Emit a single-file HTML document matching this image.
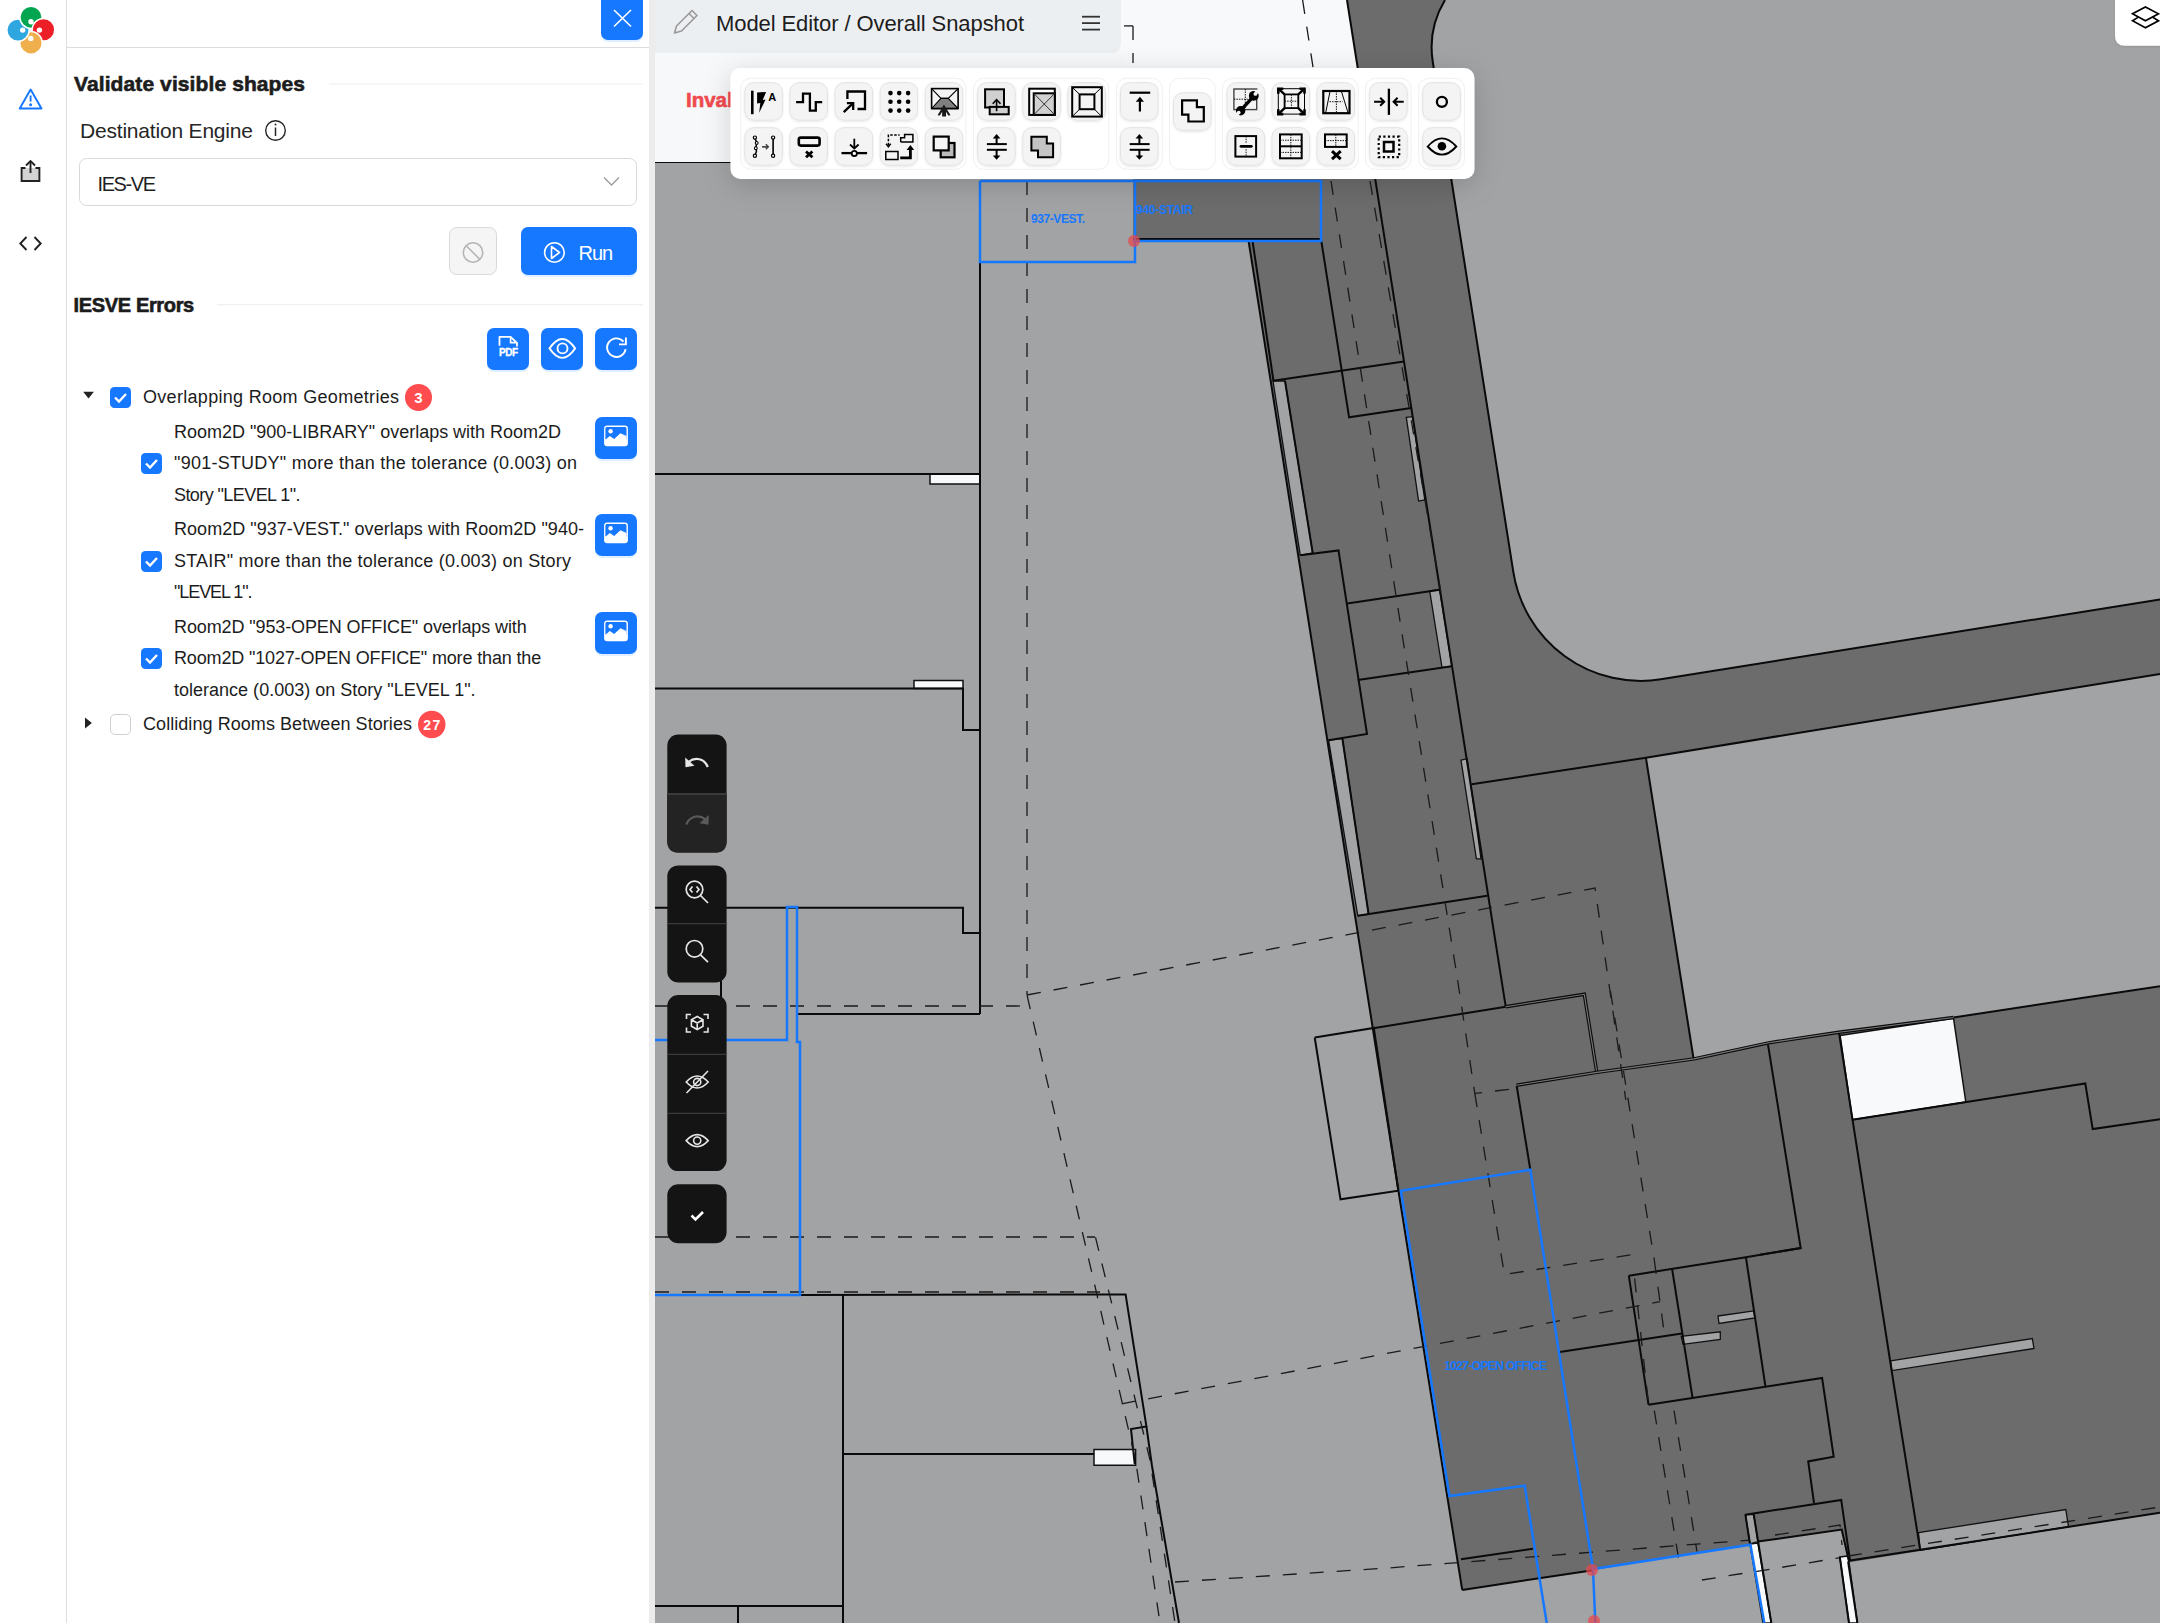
<!DOCTYPE html><html><head><meta charset="utf-8"><style>html,body{margin:0;padding:0;width:2160px;height:1623px;overflow:hidden;background:#fff;}body{position:relative;font-family:"Liberation Sans", sans-serif;}</style></head><body><svg width="2160" height="1623" style="position:absolute;left:0;top:0" font-family='"Liberation Sans", sans-serif'>
<defs><filter id="sh" x="-15%" y="-60%" width="130%" height="220%"><feDropShadow dx="0" dy="6" stdDeviation="14" flood-color="#000" flood-opacity="0.16"/></filter><filter id="sh2" x="-20%" y="-20%" width="140%" height="160%"><feDropShadow dx="0" dy="1" stdDeviation="1" flood-color="#000" flood-opacity="0.10"/></filter><filter id="bsh" x="-20%" y="-20%" width="140%" height="160%"><feDropShadow dx="0" dy="2" stdDeviation="0.6" flood-color="#1677ff" flood-opacity="0.12"/></filter><clipPath id="cv"><rect x="655" y="0" width="1505" height="1623"/></clipPath></defs>
<g clip-path="url(#cv)"><rect x="655" y="0" width="1505" height="1623" fill="#f8f9fa"/><polygon fill="#a2a3a5" points="655.0,162.0 1373.0,162.0 1347.0,0.0 2160.0,0.0 2160.0,1623.0 655.0,1623.0"/><path fill="#6c6c6c" d="M1347,0 L1445,0 A92,92 0 0,0 1432.8,62 L1513.3,571.9 A129,129 0 0,0 1660.9,679.3 L2160,599.4 L2160,674 L1645.9,757.7 L1693.6,1059 L1768.6,1042.8 L1838.9,1032.2 L1953.5,1017.5 L2160,986.2 L2160,1512.7 L1848.7,1562.4 L1841.7,1529.5 L1757.9,1541.6 L1750,1544 L1593,1570.2 L1462.2,1589.9 L1398.4,1190.7 L1248.6,241 L1133,241 L1133,162 L1373,162 Z"/><polygon fill="#a2a3a5" stroke="#111" stroke-width="1.3" points="1273.0,381.0 1285.0,381.0 1312.7,553.0 1300.3,555.3"/><polygon fill="#a2a3a5" stroke="#111" stroke-width="1.3" points="1328.6,740.2 1342.4,738.6 1368.6,914.2 1357.8,915.8"/><polygon fill="#a2a3a5" stroke="#111" stroke-width="1.3" points="1406.3,417.3 1412.5,416.6 1424.8,499.9 1418.6,501.1"/><polygon fill="#a2a3a5" stroke="#111" stroke-width="1.3" points="1429.7,591.0 1439.6,589.8 1451.8,666.2 1442.0,667.6"/><polygon fill="#a2a3a5" stroke="#111" stroke-width="1.3" points="1461.0,760.2 1467.2,758.7 1481.0,858.8 1476.4,858.8"/><polygon fill="#a2a3a5" stroke="#111" stroke-width="1.3" points="1890.6,1360.8 2032.3,1338.6 2034.0,1348.5 1891.9,1370.6"/><polygon fill="#a2a3a5" stroke="#111" stroke-width="1.3" points="1918.5,1532.7 2065.8,1509.5 2068.5,1526.6 1920.2,1550.2"/><polygon fill="#a2a3a5" stroke="#111" stroke-width="1.3" points="1681.2,1336.4 1720.3,1331.8 1720.3,1339.4 1683.0,1344.3"/><polygon fill="#a2a3a5" stroke="#111" stroke-width="1.3" points="1718.0,1316.0 1753.7,1310.9 1754.9,1317.9 1719.0,1323.5"/><polygon fill="#a2a3a5" stroke="#111" stroke-width="1.3" points="1745.4,1514.7 1753.7,1514.3 1757.9,1541.6 1750.0,1543.9"/><polygon fill="#f8f9fb" stroke="#111" stroke-width="1.5" points="1840.1,1035.5 1953.5,1018.2 1965.8,1102.0 1852.4,1119.7"/><polygon fill="#f8f9fb" stroke="#111" stroke-width="1.5" points="1750.0,1543.9 1757.9,1543.0 1771.3,1623.0 1763.0,1623.0"/><polygon fill="#f8f9fb" stroke="#111" stroke-width="1.5" points="1839.8,1556.9 1848.1,1555.9 1857.4,1623.0 1849.0,1623.0"/><polygon fill="#f8f9fb" stroke="#111" stroke-width="1.5" points="930.0,474.0 980.0,474.0 980.0,484.0 930.0,484.0"/><polygon fill="#f8f9fb" stroke="#111" stroke-width="1.5" points="914.0,680.5 963.0,680.5 963.0,688.6 914.0,688.6"/><polygon fill="#f8f9fb" stroke="#111" stroke-width="1.5" points="1094.0,1449.4 1135.6,1449.4 1135.6,1465.3 1094.0,1465.3"/><path fill="none" stroke="#0a0a0a" stroke-width="2" d="M1445,0 A92,92 0 0,0 1432.8,62 L1513.3,571.9 A129,129 0 0,0 1660.9,679.3 L2160,599.4"/><polyline fill="none" stroke="#0a0a0a" stroke-width="2" stroke-linejoin="miter" points="655.0,162.0 1133.0,162.0"/><polyline fill="none" stroke="#0a0a0a" stroke-width="2" stroke-linejoin="miter" points="980.0,181.0 980.0,1014.0"/><polyline fill="none" stroke="#0a0a0a" stroke-width="2" stroke-linejoin="miter" points="655.0,474.0 980.0,474.0"/><polyline fill="none" stroke="#0a0a0a" stroke-width="2" stroke-linejoin="miter" points="655.0,688.6 963.0,688.6 963.0,730.0 980.0,730.0"/><polyline fill="none" stroke="#0a0a0a" stroke-width="2" stroke-linejoin="miter" points="655.0,907.8 963.0,907.8 963.0,933.0 980.0,933.0"/><polyline fill="none" stroke="#0a0a0a" stroke-width="2" stroke-linejoin="miter" points="797.0,1014.0 980.0,1014.0"/><polyline fill="none" stroke="#0a0a0a" stroke-width="2" stroke-linejoin="miter" points="721.0,907.0 721.0,1000.0"/><polyline fill="none" stroke="#0a0a0a" stroke-width="2" stroke-linejoin="miter" points="800.0,1295.0 1125.6,1294.4 1146.4,1426.4 1131.0,1429.0 1134.7,1464.0"/><polyline fill="none" stroke="#0a0a0a" stroke-width="2" stroke-linejoin="miter" points="843.0,1294.0 843.0,1623.0"/><polyline fill="none" stroke="#0a0a0a" stroke-width="2" stroke-linejoin="miter" points="843.0,1454.0 1094.0,1454.0"/><polyline fill="none" stroke="#0a0a0a" stroke-width="2" stroke-linejoin="miter" points="1146.4,1426.4 1152.0,1466.0 1179.0,1623.0"/><polyline fill="none" stroke="#0a0a0a" stroke-width="2" stroke-linejoin="miter" points="655.0,1606.0 843.0,1606.0"/><polyline fill="none" stroke="#0a0a0a" stroke-width="2" stroke-linejoin="miter" points="738.0,1606.0 738.0,1623.0"/><polyline fill="none" stroke="#0a0a0a" stroke-width="2" stroke-linejoin="miter" points="1248.6,241.0 1398.4,1190.7"/><polyline fill="none" stroke="#0a0a0a" stroke-width="2" stroke-linejoin="miter" points="1133.0,239.0 1321.0,239.0"/><polyline fill="none" stroke="#0a0a0a" stroke-width="2" stroke-linejoin="miter" points="1252.5,241.0 1273.5,381.0"/><polyline fill="none" stroke="#0a0a0a" stroke-width="2" stroke-linejoin="miter" points="1321.3,241.0 1349.1,417.3 1411.2,407.9"/><polyline fill="none" stroke="#0a0a0a" stroke-width="2" stroke-linejoin="miter" points="1273.2,380.8 1403.8,361.4"/><polyline fill="none" stroke="#0a0a0a" stroke-width="2" stroke-linejoin="miter" points="1285.0,380.8 1312.7,552.9"/><polyline fill="none" stroke="#0a0a0a" stroke-width="2" stroke-linejoin="miter" points="1300.3,555.3 1338.5,550.4 1367.0,734.0 1328.6,740.2"/><polyline fill="none" stroke="#0a0a0a" stroke-width="2" stroke-linejoin="miter" points="1347.2,603.4 1439.6,589.8"/><polyline fill="none" stroke="#0a0a0a" stroke-width="2" stroke-linejoin="miter" points="1357.8,680.1 1451.8,666.2"/><polyline fill="none" stroke="#0a0a0a" stroke-width="2" stroke-linejoin="miter" points="1342.4,738.6 1368.6,914.2"/><polyline fill="none" stroke="#0a0a0a" stroke-width="2" stroke-linejoin="miter" points="1357.8,915.8 1487.2,895.7"/><polyline fill="none" stroke="#0a0a0a" stroke-width="2" stroke-linejoin="miter" points="1373.2,1028.2 1505.7,1006.7"/><polyline fill="none" stroke="#0a0a0a" stroke-width="2" stroke-linejoin="miter" points="1347.0,0.0 1505.7,1006.7"/><polyline fill="none" stroke="#0a0a0a" stroke-width="2" stroke-linejoin="miter" points="1471.8,784.2 1645.9,757.7 2160.0,674.0"/><polyline fill="none" stroke="#0a0a0a" stroke-width="2" stroke-linejoin="miter" points="1645.9,757.7 1693.6,1059.0"/><polyline fill="none" stroke="#0a0a0a" stroke-width="2" stroke-linejoin="miter" points="1953.5,1017.5 2160.0,986.2"/><polyline fill="none" stroke="#0a0a0a" stroke-width="2" stroke-linejoin="miter" points="1314.7,1037.5 1373.8,1028.0 1398.4,1190.7 1340.5,1199.3 1314.7,1037.5"/><polyline fill="none" stroke="#0a0a0a" stroke-width="2" stroke-linejoin="miter" points="1516.7,1086.0 1530.3,1169.7"/><polyline fill="none" stroke="#0a0a0a" stroke-width="2" stroke-linejoin="miter" points="1768.0,1044.6 1800.7,1248.1 1760.0,1254.8"/><polyline fill="none" stroke="#0a0a0a" stroke-width="2" stroke-linejoin="miter" points="1559.8,1352.1 1681.8,1333.6"/><polyline fill="none" stroke="#0a0a0a" stroke-width="2" stroke-linejoin="miter" points="1628.8,1275.7 1745.9,1257.2 1800.7,1248.1"/><polyline fill="none" stroke="#0a0a0a" stroke-width="2" stroke-linejoin="miter" points="1628.8,1275.7 1648.5,1404.7"/><polyline fill="none" stroke="#0a0a0a" stroke-width="2" stroke-linejoin="miter" points="1672.0,1268.3 1692.5,1397.7"/><polyline fill="none" stroke="#0a0a0a" stroke-width="2" stroke-linejoin="miter" points="1745.9,1257.2 1765.4,1386.2"/><polyline fill="none" stroke="#0a0a0a" stroke-width="2" stroke-linejoin="miter" points="1648.5,1404.7 1822.1,1378.0 1833.7,1456.8 1808.2,1461.4 1814.0,1503.0"/><polyline fill="none" stroke="#0a0a0a" stroke-width="2" stroke-linejoin="miter" points="1745.4,1514.7 1841.2,1499.9 1850.0,1560.6 2160.0,1512.7"/><polyline fill="none" stroke="#0a0a0a" stroke-width="2" stroke-linejoin="miter" points="1757.9,1541.6 1841.7,1529.5 1849.0,1561.5"/><polyline fill="none" stroke="#0a0a0a" stroke-width="2" stroke-linejoin="miter" points="1745.4,1514.7 1750.0,1544.0"/><polyline fill="none" stroke="#0a0a0a" stroke-width="2" stroke-linejoin="miter" points="1753.7,1514.3 1771.3,1623.0"/><polyline fill="none" stroke="#0a0a0a" stroke-width="2" stroke-linejoin="miter" points="1839.8,1556.9 1849.0,1623.0"/><polyline fill="none" stroke="#0a0a0a" stroke-width="2" stroke-linejoin="miter" points="1848.1,1561.5 1857.4,1623.0"/><polyline fill="none" stroke="#0a0a0a" stroke-width="2" stroke-linejoin="miter" points="1838.9,1032.2 1893.1,1380.0 1920.2,1550.2"/><polyline fill="none" stroke="#0a0a0a" stroke-width="2" stroke-linejoin="miter" points="1852.4,1119.7 2085.3,1083.5 2092.7,1129.1 2160.0,1119.2"/><polyline fill="none" stroke="#0a0a0a" stroke-width="2" stroke-linejoin="miter" points="1462.2,1589.9 1593.0,1570.2"/><polyline fill="none" stroke="#0a0a0a" stroke-width="2" stroke-linejoin="miter" points="1461.0,1559.3 1533.0,1548.8"/><polyline fill="none" stroke="#0a0a0a" stroke-width="2" stroke-linejoin="miter" points="1398.4,1190.7 1462.2,1589.9"/><polyline fill="none" stroke="#0a0a0a" stroke-width="3.4" points="1505.7,1006.7 1584.3,994.3 1596.6,1071.3"/><polyline fill="none" stroke="#7a7a7a" stroke-width="1.1" points="1505.7,1006.7 1584.3,994.3 1596.6,1071.3"/><polyline fill="none" stroke="#0a0a0a" stroke-width="3.4" points="1516.5,1085.2 1596.8,1072.4 1694.1,1058.9 1768.6,1042.8 1838.9,1032.2 1953.5,1017.5"/><polyline fill="none" stroke="#7a7a7a" stroke-width="1.1" points="1516.5,1085.2 1596.8,1072.4 1694.1,1058.9 1768.6,1042.8 1838.9,1032.2 1953.5,1017.5"/><polyline fill="none" stroke="#1a1a1a" stroke-width="1.3" stroke-dasharray="14,13" points="1027.0,181.0 1027.0,995.0"/><polyline fill="none" stroke="#1a1a1a" stroke-width="1.3" stroke-dasharray="14,13" points="655.0,1006.0 1027.0,1006.0"/><polyline fill="none" stroke="#1a1a1a" stroke-width="1.3" stroke-dasharray="14,13" points="1027.0,995.0 1595.0,888.0 1625.8,1100.0"/><polyline fill="none" stroke="#1a1a1a" stroke-width="1.3" stroke-dasharray="14,13" points="1457.6,980.0 1474.8,1093.4 1516.7,1088.4"/><polyline fill="none" stroke="#1a1a1a" stroke-width="1.3" stroke-dasharray="14,13" points="1474.8,1093.4 1504.4,1274.5 1631.3,1254.8"/><polyline fill="none" stroke="#1a1a1a" stroke-width="1.3" stroke-dasharray="14,13" points="1610.4,991.0 1654.3,1260.0"/><polyline fill="none" stroke="#1a1a1a" stroke-width="1.3" stroke-dasharray="14,13" points="1370.0,181.0 1440.8,592.0"/><polyline fill="none" stroke="#1a1a1a" stroke-width="1.3" stroke-dasharray="14,13" points="1331.0,181.0 1401.4,630.0 1457.6,980.0"/><polyline fill="none" stroke="#1a1a1a" stroke-width="1.3" stroke-dasharray="14,13" points="1302.6,0.0 1315.0,80.0"/><polyline fill="none" stroke="#1a1a1a" stroke-width="1.3" stroke-dasharray="14,13" points="1027.1,995.4 1135.6,1460.2 1160.0,1623.0"/><polyline fill="none" stroke="#1a1a1a" stroke-width="1.3" stroke-dasharray="14,13" points="1095.5,1237.3 1150.0,1460.0 1175.0,1623.0"/><polyline fill="none" stroke="#1a1a1a" stroke-width="1.3" stroke-dasharray="14,13" points="655.0,1237.0 1095.0,1237.0"/><polyline fill="none" stroke="#1a1a1a" stroke-width="1.3" stroke-dasharray="14,13" points="655.0,1292.0 1100.0,1292.0"/><polyline fill="none" stroke="#1a1a1a" stroke-width="1.3" stroke-dasharray="14,13" points="1121.7,1403.8 1660.0,1301.7"/><polyline fill="none" stroke="#1a1a1a" stroke-width="1.3" stroke-dasharray="14,13" points="1175.0,1582.0 1389.3,1567.9 1700.0,1543.9 1750.0,1540.2"/><polyline fill="none" stroke="#1a1a1a" stroke-width="1.3" stroke-dasharray="14,13" points="1755.6,1571.7 1838.9,1557.8"/><polyline fill="none" stroke="#1a1a1a" stroke-width="1.3" stroke-dasharray="14,13" points="1848.0,1556.0 2160.0,1507.0"/><polyline fill="none" stroke="#1a1a1a" stroke-width="1.3" stroke-dasharray="14,13" points="1701.9,1580.0 1748.0,1572.6"/><polyline fill="none" stroke="#1a1a1a" stroke-width="1.3" stroke-dasharray="14,13" points="1775.0,1535.0 1840.0,1525.0 1842.0,1545.0"/><polyline fill="none" stroke="#1a1a1a" stroke-width="1.3" stroke-dasharray="14,13" points="1634.6,1278.5 1648.5,1403.5"/><polyline fill="none" stroke="#1a1a1a" stroke-width="1.3" stroke-dasharray="14,13" points="1654.3,1260.0 1664.7,1336.4"/><polyline fill="none" stroke="#1a1a1a" stroke-width="1.3" stroke-dasharray="14,13" points="1654.3,1410.5 1678.6,1558.6"/><polyline fill="none" stroke="#1a1a1a" stroke-width="1.3" stroke-dasharray="14,13" points="1674.0,1410.5 1697.0,1551.7"/><polyline fill="none" stroke="#1a1a1a" stroke-width="1.3" stroke-dasharray="14,13" points="1133.0,25.9 1133.0,63.0"/><polyline fill="none" stroke="#1a1a1a" stroke-width="1.3" stroke-dasharray="14,13" points="1124.0,25.9 1133.0,25.9"/><polyline fill="none" stroke="#1677ff" stroke-width="2.5" points="980.0,181.0 1135.0,181.0 1135.0,262.0 980.0,262.0 980.0,181.0"/><polyline fill="none" stroke="#1677ff" stroke-width="2.5" points="1133.0,181.0 1321.0,181.0 1321.0,241.0 1133.0,241.0"/><polyline fill="none" stroke="#1677ff" stroke-width="2.5" points="655.0,1040.0 787.0,1040.0 787.0,907.0 797.0,907.0 797.0,1042.0 800.0,1042.0 800.0,1295.0 655.0,1295.0"/><polyline fill="none" stroke="#1677ff" stroke-width="2.5" points="1546.7,1623.0 1524.7,1485.7 1449.4,1496.1 1400.9,1190.7 1530.3,1169.7 1593.0,1569.0 1750.4,1544.7 1764.3,1623.0"/><polyline fill="none" stroke="#1677ff" stroke-width="2.5" points="1593.0,1569.0 1595.3,1623.0"/><circle cx="1134" cy="241" r="6" fill="#e5484d" fill-opacity="0.75"/><circle cx="1592" cy="1570" r="6" fill="#e5484d" fill-opacity="0.75"/><circle cx="1594" cy="1621" r="6" fill="#e5484d" fill-opacity="0.75"/><text x="1031" y="223" font-size="12" font-weight="bold" fill="#1677ff" text-anchor="start" textLength="54" lengthAdjust="spacing" >937-VEST.</text><text x="1136" y="214" font-size="12" font-weight="bold" fill="#1677ff" text-anchor="start" textLength="57" lengthAdjust="spacing" >940-STAIR</text><text x="1444" y="1369.5" font-size="12.5" font-weight="bold" fill="#1677ff" text-anchor="start" textLength="103" lengthAdjust="spacing" >1027-OPEN OFFICE</text></g>
<rect x="655" y="53" width="470" height="109" fill="#f7f8fa"/>
<text x="686" y="107" font-size="20.5" font-weight="bold" fill="#f04a4f" text-anchor="start" stroke="#f04a4f" stroke-width="0.6">Invalid</text>
<path d="M655,0 H1121 V43 Q1121,53 1111,53 H655 Z" fill="#eceff2"/>
<g fill="none" stroke="#9a9a9a" stroke-width="1.6" stroke-linejoin="round"><path d="M674.5,33 L676.5,26 L692,10.5 L697,15.5 L681.5,31 Z"/><path d="M689,13.5 L694,18.5"/></g>
<text x="716" y="31.2" font-size="22" font-weight="normal" fill="#1d1d1d" text-anchor="start" textLength="308" lengthAdjust="spacing" >Model Editor / Overall Snapshot</text>
<g stroke="#333" stroke-width="1.8"><line x1="1082" y1="16.7" x2="1100" y2="16.7"/><line x1="1082" y1="23.1" x2="1100" y2="23.1"/><line x1="1082" y1="29.6" x2="1100" y2="29.6"/></g>
<rect x="730.5" y="68" width="744" height="111" rx="10" fill="#fff" filter="url(#sh)"/>
<rect x="740.7" y="78.3" width="225.3" height="91" rx="10" fill="#fff" stroke="#f0f0f0" stroke-width="1"/>
<rect x="973.6" y="78.3" width="135.2" height="91" rx="10" fill="#fff" stroke="#f0f0f0" stroke-width="1"/>
<rect x="1116.6" y="78.3" width="45.7" height="91" rx="10" fill="#fff" stroke="#f0f0f0" stroke-width="1"/>
<rect x="1169.5" y="78.3" width="45.7" height="91" rx="10" fill="#fff" stroke="#f0f0f0" stroke-width="1"/>
<rect x="1222.4" y="78.3" width="135.8" height="91" rx="10" fill="#fff" stroke="#f0f0f0" stroke-width="1"/>
<rect x="1365.4" y="78.3" width="45.6" height="91" rx="10" fill="#fff" stroke="#f0f0f0" stroke-width="1"/>
<rect x="1418.7" y="78.3" width="45.7" height="91" rx="10" fill="#fff" stroke="#f0f0f0" stroke-width="1"/>
<g transform="translate(744.3,82.2)"><rect x="0.5" y="0.5" width="37.5" height="37.5" rx="9" fill="#f4f4f4" stroke="#e3e3e3" stroke-width="1" filter="url(#sh2)"/><line x1="8" y1="8.5" x2="8" y2="32" stroke="#000" stroke-width="2.6"/><polygon points="12.8,10.3 21.8,9.8 18.4,17.8 21.3,17.3 14.9,30.6 16,20.8 12.8,21.2" fill="#000"/><text x="24" y="18.8" font-size="11" font-weight="bold">A</text></g>
<g transform="translate(744.3,127.2)"><rect x="0.5" y="0.5" width="37.5" height="37.5" rx="9" fill="#f4f4f4" stroke="#e3e3e3" stroke-width="1" filter="url(#sh2)"/><polyline fill="none" stroke="#000" stroke-width="1.5" points="10.6,10.4 12.4,15.7 11.5,21 12.2,24 10.6,28.5"/><circle cx="10.6" cy="10.4" r="1.6" fill="#fff" stroke="#000" stroke-width="1.2"/><circle cx="12.4" cy="15.7" r="1.4" fill="#fff" stroke="#000" stroke-width="1.1"/><circle cx="11.5" cy="21" r="1.4" fill="#fff" stroke="#000" stroke-width="1.1"/><circle cx="10.6" cy="28.5" r="1.6" fill="#fff" stroke="#000" stroke-width="1.2"/><line x1="28.8" y1="10.4" x2="28.8" y2="28.5" stroke="#000" stroke-width="1.6"/><circle cx="28.8" cy="10.4" r="1.6" fill="#fff" stroke="#000" stroke-width="1.2"/><circle cx="28.8" cy="28.5" r="1.6" fill="#fff" stroke="#000" stroke-width="1.2"/><polyline fill="none" stroke="#444" stroke-width="1.4" points="18,19.5 24,19.5 M21.5,17 24,19.5 21.5,22"/><path d="M18,19.5 H24 M21.5,17 L24,19.5 L21.5,22" fill="none" stroke="#444" stroke-width="1.4"/></g>
<g transform="translate(789.4,82.2)"><rect x="0.5" y="0.5" width="37.5" height="37.5" rx="9" fill="#f4f4f4" stroke="#e3e3e3" stroke-width="1" filter="url(#sh2)"/><polyline fill="none" stroke="#000" stroke-width="2.3" points="6.7,19.9 13.6,19.9 13.6,11.4 20.5,11.4 20.5,28.4 26.4,28.4 26.4,19.9 32.8,19.9"/></g>
<g transform="translate(789.4,127.2)"><rect x="0.5" y="0.5" width="37.5" height="37.5" rx="9" fill="#f4f4f4" stroke="#e3e3e3" stroke-width="1" filter="url(#sh2)"/><rect x="9.4" y="10.4" width="20.8" height="8" rx="2" fill="none" stroke="#000" stroke-width="2.6"/><path d="M16.6,24.3 L23,30.1 M23,24.3 L16.6,30.1" stroke="#000" stroke-width="2.8"/></g>
<g transform="translate(834.5,82.2)"><rect x="0.5" y="0.5" width="37.5" height="37.5" rx="9" fill="#f4f4f4" stroke="#e3e3e3" stroke-width="1" filter="url(#sh2)"/><polyline fill="none" stroke="#000" stroke-width="2.3" points="12.9,16.7 12.9,9.3 30.5,9.3 30.5,26.8 23,26.8"/><line fill="none" stroke="#000" stroke-width="2.3" x1="9.2" y1="30" x2="18.7" y2="21"/><polyline fill="none" stroke="#000" stroke-width="2.3" points="12.4,21 18.7,21 18.7,27.9"/></g>
<g transform="translate(834.5,127.2)"><rect x="0.5" y="0.5" width="37.5" height="37.5" rx="9" fill="#f4f4f4" stroke="#e3e3e3" stroke-width="1" filter="url(#sh2)"/><line x1="19.8" y1="11.5" x2="19.8" y2="21" stroke="#000" stroke-width="1.8"/><polyline fill="none" stroke="#000" stroke-width="1.8" points="15.5,17.3 19.8,21.3 24.1,17.3"/><line x1="7" y1="25.9" x2="32.6" y2="25.9" stroke="#000" stroke-width="2.3"/><circle cx="19.8" cy="26.2" r="2.6" fill="#fff" stroke="#000" stroke-width="1.8"/></g>
<g transform="translate(879.6,82.2)"><rect x="0.5" y="0.5" width="37.5" height="37.5" rx="9" fill="#f4f4f4" stroke="#e3e3e3" stroke-width="1" filter="url(#sh2)"/><circle cx="10.9" cy="10.9" r="2.3" fill="#000"/><circle cx="10.9" cy="19.6" r="2.3" fill="#000"/><circle cx="10.9" cy="28.4" r="2.3" fill="#000"/><circle cx="19.6" cy="10.9" r="2.3" fill="#000"/><circle cx="19.6" cy="19.6" r="2.3" fill="#000"/><circle cx="19.6" cy="28.4" r="2.3" fill="#000"/><circle cx="28.5" cy="10.9" r="2.3" fill="#000"/><circle cx="28.5" cy="19.6" r="2.3" fill="#000"/><circle cx="28.5" cy="28.4" r="2.3" fill="#000"/></g>
<g transform="translate(879.6,127.2)"><rect x="0.5" y="0.5" width="37.5" height="37.5" rx="9" fill="#f4f4f4" stroke="#e3e3e3" stroke-width="1" filter="url(#sh2)"/><polyline fill="none" stroke="#000" stroke-width="1.5" stroke-dasharray="2.5,1.5" points="8.8,18 8.8,7.8 20,7.8"/><polyline fill="none" stroke="#000" stroke-width="1.5" points="6.5,16.5 8.8,19.5 11.1,16.5"/><polyline fill="none" stroke="#000" stroke-width="1.5" points="21.1,14.7 21.1,10.5 25,10.5 25,7.2 33.3,7.2 33.3,14.7 21.1,14.7"/><rect x="6.2" y="24.3" width="12.2" height="8" fill="none" stroke="#000" stroke-width="1.5"/><polyline fill="none" stroke="#000" stroke-width="2.8" points="20.6,30.7 30.8,30.7 30.8,21.5"/><polygon points="30.8,17.8 27,22.8 34.6,22.8" fill="#000"/></g>
<g transform="translate(924.7,82.2)"><rect x="0.5" y="0.5" width="37.5" height="37.5" rx="9" fill="#f4f4f4" stroke="#e3e3e3" stroke-width="1" filter="url(#sh2)"/><rect x="6.9" y="6.4" width="26.5" height="19.9" fill="#f4f4f4" stroke="#000" stroke-width="1.6"/><polygon points="16.3,16.2 23.5,16.2 33.4,26.3 6.9,26.3" fill="#808080"/><polyline points="6.9,6.4 16.3,16.2 23.5,16.2 33.4,6.4" fill="none" stroke="#000" stroke-width="1.1"/><polyline points="6.9,26.3 16.3,16.2 23.5,16.2 33.4,26.3" fill="none" stroke="#000" stroke-width="1.1"/><line x1="6.9" y1="26.3" x2="33.4" y2="26.3" stroke="#000" stroke-width="1.6"/><polygon points="19.2,22.3 25.9,33 23.6,33.4 21.3,29.6 21.3,34.3 17.4,34.3 17.4,29.6 15.2,33.4 12.9,33" fill="#1a1a1a"/></g>
<g transform="translate(924.7,127.2)"><rect x="0.5" y="0.5" width="37.5" height="37.5" rx="9" fill="#f4f4f4" stroke="#e3e3e3" stroke-width="1" filter="url(#sh2)"/><rect x="16" y="15.8" width="13.8" height="14.3" fill="#bbb" stroke="#000" stroke-width="2.2"/><rect x="9" y="9.4" width="15" height="13.8" fill="#f4f4f4" stroke="#000" stroke-width="2.2"/></g>
<g transform="translate(977.2,82.2)"><rect x="0.5" y="0.5" width="37.5" height="37.5" rx="9" fill="#f4f4f4" stroke="#e3e3e3" stroke-width="1" filter="url(#sh2)"/><rect x="7.9" y="7.1" width="18.9" height="18.2" fill="#d0d0d0" stroke="#000" stroke-width="2"/><rect x="12.5" y="24.7" width="19" height="7.4" fill="#d0d0d0" stroke="#000" stroke-width="2"/><line x1="19.4" y1="29" x2="19.4" y2="18" stroke="#000" stroke-width="1.6"/><polyline fill="none" stroke="#000" stroke-width="1.6" points="15.5,21.5 19.4,17.5 23.3,21.5"/></g>
<g transform="translate(1022.3,82.2)"><rect x="0.5" y="0.5" width="37.5" height="37.5" rx="9" fill="#f4f4f4" stroke="#e3e3e3" stroke-width="1" filter="url(#sh2)"/><rect x="6.9" y="6.5" width="25.6" height="26.2" fill="#fff" stroke="#000" stroke-width="2"/><rect x="11.4" y="11.1" width="21.1" height="21.6" fill="#d0d0d0" stroke="#000" stroke-width="2"/><path d="M11.4,11.1 L32.5,32.7 M32.5,11.1 L11.4,32.7" stroke="#333" stroke-width="1"/></g>
<g transform="translate(1067.4,82.2)"><rect x="0.5" y="0.5" width="37.5" height="37.5" rx="9" fill="#f4f4f4" stroke="#e3e3e3" stroke-width="1" filter="url(#sh2)"/><rect x="4.8" y="5" width="29.6" height="29.4" fill="none" stroke="#000" stroke-width="2"/><rect x="12.2" y="12.2" width="14.8" height="14.8" fill="none" stroke="#000" stroke-width="2"/><path d="M4.8,5 L12.2,12.2 M34.4,5 L27,12.2 M4.8,34.4 L12.2,27 M34.4,34.4 L27,27" stroke="#000" stroke-width="1"/></g>
<g transform="translate(977.2,127.2)"><rect x="0.5" y="0.5" width="37.5" height="37.5" rx="9" fill="#f4f4f4" stroke="#e3e3e3" stroke-width="1" filter="url(#sh2)"/><line x1="9.7" y1="16.9" x2="29.6" y2="16.9" stroke="#000" stroke-width="2"/><line x1="9.7" y1="22.6" x2="29.6" y2="22.6" stroke="#000" stroke-width="2"/><line x1="19.4" y1="16.9" x2="19.4" y2="9" stroke="#000" stroke-width="2"/><polygon points="19.4,6.8 15.6,11.2 23.2,11.2" fill="#000"/><line x1="19.4" y1="22.6" x2="19.4" y2="30.5" stroke="#000" stroke-width="2"/><polygon points="19.4,32.6 15.6,28.2 23.2,28.2" fill="#000"/></g>
<g transform="translate(1022.3,127.2)"><rect x="0.5" y="0.5" width="37.5" height="37.5" rx="9" fill="#f4f4f4" stroke="#e3e3e3" stroke-width="1" filter="url(#sh2)"/><polygon points="9.1,9.5 24.5,9.5 24.5,16.4 30.8,16.4 30.8,30.1 15.7,30.1 15.7,23.2 9.1,23.2" fill="#c4c4c4" stroke="#000" stroke-width="2"/></g>
<g transform="translate(1120.0,82.2)"><rect x="0.5" y="0.5" width="37.5" height="37.5" rx="9" fill="#f4f4f4" stroke="#e3e3e3" stroke-width="1" filter="url(#sh2)"/><line x1="9.7" y1="10.5" x2="30.2" y2="10.5" stroke="#000" stroke-width="2.2"/><line x1="19.9" y1="29.3" x2="19.9" y2="18" stroke="#000" stroke-width="2.2"/><polygon points="19.9,14.6 15.8,19.5 24,19.5" fill="#000"/></g>
<g transform="translate(1120.0,127.2)"><rect x="0.5" y="0.5" width="37.5" height="37.5" rx="9" fill="#f4f4f4" stroke="#e3e3e3" stroke-width="1" filter="url(#sh2)"/><line x1="9.7" y1="16.9" x2="29.6" y2="16.9" stroke="#000" stroke-width="2"/><line x1="9.7" y1="22.6" x2="29.6" y2="22.6" stroke="#000" stroke-width="2"/><line x1="19.4" y1="16.9" x2="19.4" y2="9" stroke="#000" stroke-width="2"/><polygon points="19.4,6.8 15.6,11.2 23.2,11.2" fill="#000"/><line x1="19.4" y1="22.6" x2="19.4" y2="30.5" stroke="#000" stroke-width="2"/><polygon points="19.4,32.6 15.6,28.2 23.2,28.2" fill="#000"/></g>
<g transform="translate(1173.0,92.3)"><rect x="0.5" y="0.5" width="37.5" height="37.5" rx="9" fill="#f4f4f4" stroke="#e3e3e3" stroke-width="1" filter="url(#sh2)"/><polygon points="9.1,8.1 23.9,8.1 23.9,14.9 30.8,14.9 30.8,29.2 15.4,29.2 15.4,22.3 9.1,22.3" fill="#f4f4f4" stroke="#000" stroke-width="2.2"/></g>
<g transform="translate(1226.5,82.2)"><rect x="0.5" y="0.5" width="37.5" height="37.5" rx="9" fill="#f4f4f4" stroke="#e3e3e3" stroke-width="1" filter="url(#sh2)"/><rect x="7.4" y="6.8" width="22.8" height="20.6" fill="none" stroke="#444" stroke-width="1.4"/><line x1="18.8" y1="6.8" x2="18.8" y2="27.4" stroke="#000" stroke-width="0.9" stroke-dasharray="1.5,1"/><line x1="7.4" y1="17" x2="30.2" y2="17" stroke="#000" stroke-width="0.9" stroke-dasharray="1.5,1"/><line x1="14.2" y1="28.2" x2="27.2" y2="14" stroke="#000" stroke-width="3.4"/><circle cx="27.3" cy="13.6" r="4.9" fill="#000"/><circle cx="14.1" cy="28.6" r="4.7" fill="#000"/><circle cx="28.9" cy="11.7" r="1.9" fill="#f4f4f4"/><circle cx="30.6" cy="9.4" r="2.2" fill="#f4f4f4"/><circle cx="12.2" cy="30.4" r="1.9" fill="#f4f4f4"/><circle cx="10.4" cy="32.6" r="2.2" fill="#f4f4f4"/></g>
<g transform="translate(1226.5,127.2)"><rect x="0.5" y="0.5" width="37.5" height="37.5" rx="9" fill="#f4f4f4" stroke="#e3e3e3" stroke-width="1" filter="url(#sh2)"/><rect x="8.9" y="8.9" width="20.7" height="20.5" fill="none" stroke="#000" stroke-width="2"/><line x1="14.5" y1="19.1" x2="24.8" y2="19.1" stroke="#000" stroke-width="2.8" stroke-linecap="round"/><line x1="19.6" y1="9" x2="19.6" y2="16" stroke="#000" stroke-width="0.9" stroke-dasharray="1.5,1"/><line x1="19.6" y1="22" x2="19.6" y2="29.4" stroke="#000" stroke-width="0.9" stroke-dasharray="1.5,1"/></g>
<g transform="translate(1271.5,82.2)"><rect x="0.5" y="0.5" width="37.5" height="37.5" rx="9" fill="#f4f4f4" stroke="#e3e3e3" stroke-width="1" filter="url(#sh2)"/><rect x="6.8" y="6.5" width="26.2" height="25.4" fill="none" stroke="#000" stroke-width="1"/><rect x="13.1" y="12.2" width="13.7" height="13.7" fill="none" stroke="#000" stroke-width="1.8"/><path d="M6.8,6.5 L13.1,12.2 M33,6.5 L26.8,12.2 M6.8,31.9 L13.1,25.9 M33,31.9 L26.8,25.9" stroke="#000" stroke-width="2.4"/><path d="M6.8,11.5 V6.5 H11.8 M28,6.5 H33 V11.5 M33,27 V31.9 H28 M11.8,31.9 H6.8 V27" fill="none" stroke="#000" stroke-width="2.6"/><line x1="19.9" y1="12.2" x2="19.9" y2="25.9" stroke="#000" stroke-width="0.9" stroke-dasharray="1.5,1"/><line x1="13.1" y1="19" x2="26.8" y2="19" stroke="#000" stroke-width="0.9" stroke-dasharray="1.5,1"/></g>
<g transform="translate(1271.5,127.2)"><rect x="0.5" y="0.5" width="37.5" height="37.5" rx="9" fill="#f4f4f4" stroke="#e3e3e3" stroke-width="1" filter="url(#sh2)"/><rect x="8.5" y="7.2" width="21.7" height="23.9" fill="none" stroke="#000" stroke-width="2"/><line x1="8.5" y1="19.1" x2="30.2" y2="19.1" stroke="#000" stroke-width="2"/><line x1="8.5" y1="13" x2="30.2" y2="13" stroke="#000" stroke-width="0.9" stroke-dasharray="1.5,1"/><line x1="8.5" y1="25.2" x2="30.2" y2="25.2" stroke="#000" stroke-width="0.9" stroke-dasharray="1.5,1"/><line x1="19.3" y1="7.2" x2="19.3" y2="31" stroke="#000" stroke-width="0.9" stroke-dasharray="1.5,1"/></g>
<g transform="translate(1316.5,82.2)"><rect x="0.5" y="0.5" width="37.5" height="37.5" rx="9" fill="#f4f4f4" stroke="#e3e3e3" stroke-width="1" filter="url(#sh2)"/><rect x="6.8" y="8.8" width="26.2" height="22.2" fill="none" stroke="#000" stroke-width="2.2"/><path d="M13.6,8.8 L9.1,31 M24.8,8.8 L31.7,31" stroke="#000" stroke-width="1"/><line x1="19.9" y1="8.8" x2="19.9" y2="31" stroke="#000" stroke-width="0.9" stroke-dasharray="1.5,1"/><line x1="13" y1="19.5" x2="26" y2="19.5" stroke="#000" stroke-width="0.9" stroke-dasharray="1.5,1"/></g>
<g transform="translate(1316.5,127.2)"><rect x="0.5" y="0.5" width="37.5" height="37.5" rx="9" fill="#f4f4f4" stroke="#e3e3e3" stroke-width="1" filter="url(#sh2)"/><rect x="8.5" y="7.2" width="21.7" height="12.5" fill="none" stroke="#000" stroke-width="2"/><line x1="8.5" y1="13.4" x2="30.2" y2="13.4" stroke="#000" stroke-width="0.9" stroke-dasharray="1.5,1"/><line x1="19.3" y1="7.2" x2="19.3" y2="19.7" stroke="#000" stroke-width="0.9" stroke-dasharray="1.5,1"/><path d="M15.5,24 L24.2,32 M24.2,24 L15.5,32" stroke="#000" stroke-width="3"/></g>
<g transform="translate(1369.2,82.2)"><rect x="0.5" y="0.5" width="37.5" height="37.5" rx="9" fill="#f4f4f4" stroke="#e3e3e3" stroke-width="1" filter="url(#sh2)"/><line x1="19.7" y1="6.5" x2="19.7" y2="32.7" stroke="#000" stroke-width="2.3"/><path d="M4.9,19.6 H14.8 M11,15.6 L15,19.6 L11,23.6 M34.5,19.6 H24.6 M28.4,15.6 L24.4,19.6 L28.4,23.6" fill="none" stroke="#000" stroke-width="2"/></g>
<g transform="translate(1369.2,127.2)"><rect x="0.5" y="0.5" width="37.5" height="37.5" rx="9" fill="#f4f4f4" stroke="#e3e3e3" stroke-width="1" filter="url(#sh2)"/><rect x="9.5" y="9.5" width="20.5" height="20.5" fill="none" stroke="#000" stroke-width="2.2" stroke-dasharray="2.2,2.4"/><rect x="14.8" y="14.8" width="9.5" height="9.5" fill="none" stroke="#000" stroke-width="2.5"/></g>
<g transform="translate(1422.3,82.2)"><rect x="0.5" y="0.5" width="37.5" height="37.5" rx="9" fill="#f4f4f4" stroke="#e3e3e3" stroke-width="1" filter="url(#sh2)"/><circle cx="19.6" cy="19.6" r="5" fill="none" stroke="#000" stroke-width="2.3"/></g>
<g transform="translate(1422.3,127.2)"><rect x="0.5" y="0.5" width="37.5" height="37.5" rx="9" fill="#f4f4f4" stroke="#e3e3e3" stroke-width="1" filter="url(#sh2)"/><path d="M5.4,19.3 Q19.6,3 34,19.3 Q19.6,35.5 5.4,19.3 Z" fill="none" stroke="#000" stroke-width="1.9"/><circle cx="19.6" cy="19.1" r="4.3" fill="#000"/></g>
<rect x="667.3" y="734.5" width="59.3" height="118.10000000000002" rx="11" fill="#141414"/>
<path d="M667.3,794 H726.6 V841.6 Q726.6,852.6 715.6,852.6 H678.3 Q667.3,852.6 667.3,841.6 Z" fill="#232323"/><line x1="667.5" y1="794" x2="726.5" y2="794" stroke="#3a3a3a" stroke-width="2"/>
<path d="M707.8,767 C704.5,758.5 695,756.5 688.5,762" fill="none" stroke="#e6e6e6" stroke-width="2.2"/><polygon points="685.2,757.5 685.5,767.2 694.5,765.8" fill="#e6e6e6"/>
<path d="M686.3,824.5 C689.5,816 699,814 705.5,819.5" fill="none" stroke="#5a5a5a" stroke-width="2.2"/><polygon points="708.8,815 708.5,824.7 699.5,823.3" fill="#5a5a5a"/>
<rect x="667.3" y="865.4" width="59.3" height="117.0" rx="11" fill="#141414"/><line x1="667.5" y1="923.6" x2="726.5" y2="923.6" stroke="#3a3a3a" stroke-width="1.2"/>
<g fill="none" stroke="#e6e6e6" stroke-width="1.7"><circle cx="694.5" cy="889.5" r="8.3"/><line x1="700.5" y1="895.5" x2="708" y2="903"/><polyline points="692.5,886.5 690,889.5 692.5,892.5"/><polyline points="696.5,886.5 699,889.5 696.5,892.5"/><circle cx="694.5" cy="948.8" r="8.3"/><line x1="700.5" y1="954.8" x2="708" y2="962.2"/></g>
<rect x="667.3" y="995.1" width="59.3" height="175.9999999999999" rx="11" fill="#141414"/><line x1="667.5" y1="1054.4" x2="726.5" y2="1054.4" stroke="#3a3a3a" stroke-width="1.2"/><line x1="667.5" y1="1113.4" x2="726.5" y2="1113.4" stroke="#3a3a3a" stroke-width="1.2"/>
<g fill="none" stroke="#e6e6e6" stroke-width="1.6"><path d="M686.5,1019 V1014.5 H691 M703.5,1014.5 H708 V1019 M708,1027.5 V1032 H703.5 M691,1032 H686.5 V1027.5"/><path d="M697.2,1016.5 L703,1019.7 V1026.3 L697.2,1029.5 L691.4,1026.3 V1019.7 Z M691.4,1019.7 L697.2,1023 L703,1019.7 M697.2,1023 V1029.5"/><path d="M686.2,1082 Q697.2,1070 708.2,1082 Q697.2,1094 686.2,1082 Z"/><circle cx="697.2" cy="1082" r="3.6"/><line x1="686.5" y1="1093" x2="708" y2="1071"/><path d="M686.2,1140.6 Q697.2,1128.6 708.2,1140.6 Q697.2,1152.6 686.2,1140.6 Z"/><circle cx="697.2" cy="1140.6" r="3.6"/></g>
<rect x="667.3" y="1184.2" width="59.3" height="59.0" rx="11" fill="#141414"/>
<polyline points="691.5,1215.5 695.5,1219.5 703,1212" fill="none" stroke="#fff" stroke-width="2.6"/>
<path d="M2160,0 V45.8 H2125 Q2115,45.8 2115,35.8 V0 Z" fill="#fff" filter="url(#sh2)"/>
<g fill="none" stroke="#000" stroke-width="1.6" stroke-linejoin="miter"><path d="M2132.5,13.8 L2145.4,7 L2158.5,13.8 L2145.4,20.8 Z"/><path d="M2138,17.3 L2132.5,20.8 L2145.4,27.8 L2158.5,20.8 L2152.8,17.3"/></g>
<rect x="0" y="0" width="649" height="1623" fill="#ffffff"/>
<rect x="649" y="0" width="6" height="1623" fill="#ececec"/>
<line x1="66.5" y1="0" x2="66.5" y2="1623" stroke="#dedede" stroke-width="1"/>
<line x1="67" y1="47.5" x2="649" y2="47.5" stroke="#dcdcdc" stroke-width="1"/>
<defs><clipPath id="lgc"><rect x="5" y="30" width="26" height="26"/></clipPath></defs><g stroke="#fff" stroke-width="1.5"><circle cx="18" cy="30.1" r="11.2" fill="#2ea6e0"/><circle cx="31" cy="17.3" r="11.1" fill="#02a550"/><circle cx="43.5" cy="29.7" r="11.3" fill="#ec1f27"/><circle cx="31" cy="42.9" r="11.3" fill="#efaf4c"/><circle cx="18" cy="30.1" r="11.2" fill="#2ea6e0" clip-path="url(#lgc)"/></g><g fill="#fff"><circle cx="31" cy="21.7" r="2.7"/><circle cx="39.4" cy="30.1" r="2.7"/><circle cx="30.8" cy="38.4" r="2.7"/><circle cx="22.7" cy="30.1" r="2.7"/></g>
<g fill="none" stroke="#1677ff" stroke-width="1.9" stroke-linejoin="round"><path d="M30.6,89.5 L41.5,108.5 H19.7 Z"/><line x1="30.6" y1="95.5" x2="30.6" y2="101.5"/><circle cx="30.6" cy="104.8" r="0.6" fill="#1677ff"/></g>
<g stroke="#222" stroke-width="1.9" fill="none"><path d="M25.5,168 H21.6 V181 H39.4 V168 H35.5" fill="#d3d3d3"/><line x1="30.5" y1="161" x2="30.5" y2="173"/><polyline points="26,165.5 30.5,161 35,165.5"/></g>
<g stroke="#222" stroke-width="1.9" fill="none"><polyline points="26.5,237 20.3,243.5 26.5,250"/><polyline points="34.5,237 40.7,243.5 34.5,250"/></g>
<rect x="601" y="-10" width="42" height="50" rx="7" fill="#1677ff" filter="url(#bsh)"/>
<g stroke="#fff" stroke-width="1.6"><line x1="614" y1="10" x2="631" y2="26.5"/><line x1="631" y1="10" x2="614" y2="26.5"/></g>
<text x="74" y="91" font-size="21" font-weight="bold" fill="#1c1c1c" text-anchor="start" textLength="231" lengthAdjust="spacing" stroke="#1c1c1c" stroke-width="0.6">Validate visible shapes</text>
<line x1="329" y1="84" x2="643" y2="84" stroke="#f0f0f0" stroke-width="1.2"/>
<text x="80" y="137.8" font-size="21" font-weight="normal" fill="#262626" text-anchor="start" textLength="173" lengthAdjust="spacing" >Destination Engine</text>
<g fill="none" stroke="#262626" stroke-width="1.4"><circle cx="275.5" cy="130.5" r="9.8"/></g><line x1="275.5" y1="127.5" x2="275.5" y2="136" stroke="#262626" stroke-width="1.5"/><circle cx="275.5" cy="124.6" r="1" fill="#262626"/>
<rect x="79.5" y="158.5" width="557" height="47" rx="7" fill="#fff" stroke="#d9d9d9" stroke-width="1"/>
<text x="97.5" y="190.5" font-size="20" font-weight="normal" fill="#1f1f1f" text-anchor="start" textLength="58.5" lengthAdjust="spacing" >IES-VE</text>
<polyline points="604,177.5 611.5,185 619,177.5" fill="none" stroke="#9a9a9a" stroke-width="1.3"/>
<rect x="449.5" y="227.5" width="47" height="47" rx="7" fill="#f5f5f5" stroke="#d9d9d9" stroke-width="1"/>
<g fill="none" stroke="#b5b5b5" stroke-width="1.6"><circle cx="473" cy="252.5" r="9.7"/><line x1="466.2" y1="245.7" x2="479.8" y2="259.3"/></g>
<rect x="521" y="227" width="116" height="48" rx="7" fill="#1677ff" filter="url(#bsh)"/>
<g fill="none" stroke="#fff" stroke-width="1.6"><circle cx="554.4" cy="252.5" r="9.8"/><path d="M551.5,246.5 L559.5,252.5 L551.5,258.5 Z" stroke-linejoin="round"/></g>
<text x="578.6" y="260.3" font-size="20" font-weight="normal" fill="#fff" text-anchor="start" textLength="34.4" lengthAdjust="spacing" >Run</text>
<text x="73.5" y="312" font-size="20" font-weight="bold" fill="#1c1c1c" text-anchor="start" textLength="120.7" lengthAdjust="spacing" stroke="#1c1c1c" stroke-width="0.6">IESVE Errors</text>
<line x1="217" y1="304.7" x2="643" y2="304.7" stroke="#f0f0f0" stroke-width="1.2"/>
<rect x="487" y="328" width="42" height="42" rx="7" fill="#1677ff" filter="url(#bsh)"/>
<rect x="541" y="328" width="42" height="42" rx="7" fill="#1677ff" filter="url(#bsh)"/>
<rect x="595" y="328" width="42" height="42" rx="7" fill="#1677ff" filter="url(#bsh)"/>
<path d="M499.5,345.7 V336.9 H510.6 L517,343 V346.4" fill="none" stroke="#fff" stroke-width="1.8" stroke-linejoin="round"/><path d="M510.6,336.9 V342.6 H516.7" fill="none" stroke="#fff" stroke-width="1.6"/>
<text x="499" y="356.4" font-size="10" font-weight="bold" fill="#fff" text-anchor="start" textLength="19" lengthAdjust="spacing" stroke="#fff" stroke-width="0.3">PDF</text>
<g fill="none" stroke="#fff" stroke-width="1.9"><path d="M549.5,348.4 Q562.3,329.5 575.1,348.4 Q562.3,367.3 549.5,348.4 Z"/><circle cx="562.5" cy="348.4" r="5"/></g>
<g fill="none" stroke="#fff" stroke-width="1.9"><path d="M625.6,349.2 A9.3,9.3 0 1 1 623.5,341.6"/><polyline points="619,344.4 625.9,344.4 625.9,337.4"/></g>
<polygon points="83.2,391.7 93.9,391.7 88.5,398.6" fill="#222"/>
<rect x="110" y="387" width="21" height="21" rx="4.5" fill="#1677ff"/><polyline points="115,397.5 119,401.5 126,394" fill="none" stroke="#fff" stroke-width="2.4"/>
<text x="143" y="402.8" font-size="18" font-weight="normal" fill="#1c1c1c" text-anchor="start" textLength="256" lengthAdjust="spacing" >Overlapping Room Geometries</text>
<circle cx="418.5" cy="397.4" r="13.5" fill="#ff4d4f"/>
<text x="418.5" y="403.3" font-size="15" font-weight="bold" fill="#fff" text-anchor="middle" >3</text>
<text x="174" y="437.5" font-size="18" font-weight="normal" fill="#1c1c1c" text-anchor="start" textLength="387" lengthAdjust="spacing" >Room2D &quot;900-LIBRARY&quot; overlaps with Room2D</text>
<text x="174" y="469.0" font-size="18" font-weight="normal" fill="#1c1c1c" text-anchor="start" textLength="403" lengthAdjust="spacing" >&quot;901-STUDY&quot; more than the tolerance (0.003) on</text>
<text x="174" y="500.5" font-size="18" font-weight="normal" fill="#1c1c1c" text-anchor="start" textLength="126.5" lengthAdjust="spacing" >Story &quot;LEVEL 1&quot;.</text>
<rect x="141" y="453" width="21" height="21" rx="4.5" fill="#1677ff"/><polyline points="146,463.5 150,467.5 157,460" fill="none" stroke="#fff" stroke-width="2.4"/>
<rect x="595" y="417" width="42" height="42" rx="7" fill="#1677ff" filter="url(#bsh)"/>
<rect x="604.1" y="425.4" width="23.8" height="20.8" rx="3" fill="#fff"/><rect x="605.4" y="427" width="21.1" height="13" rx="1.5" fill="#1677ff"/><polygon points="605.4,440.2 605.4,439.8 609.8,436 614.2,438.9 620.4,433.2 626.5,436 626.5,440.2" fill="#fff"/><circle cx="610.6" cy="431.2" r="2.2" fill="#fff"/>
<text x="174" y="535.3" font-size="18" font-weight="normal" fill="#1c1c1c" text-anchor="start" textLength="410" lengthAdjust="spacing" >Room2D &quot;937-VEST.&quot; overlaps with Room2D &quot;940-</text>
<text x="174" y="566.8" font-size="18" font-weight="normal" fill="#1c1c1c" text-anchor="start" textLength="397" lengthAdjust="spacing" >STAIR&quot; more than the tolerance (0.003) on Story</text>
<text x="174" y="598.3" font-size="18" font-weight="normal" fill="#1c1c1c" text-anchor="start" textLength="78.5" lengthAdjust="spacing" >&quot;LEVEL 1&quot;.</text>
<rect x="141" y="551" width="21" height="21" rx="4.5" fill="#1677ff"/><polyline points="146,561.5 150,565.5 157,558" fill="none" stroke="#fff" stroke-width="2.4"/>
<rect x="595" y="514" width="42" height="42" rx="7" fill="#1677ff" filter="url(#bsh)"/>
<rect x="604.1" y="522.4" width="23.8" height="20.8" rx="3" fill="#fff"/><rect x="605.4" y="524" width="21.1" height="13" rx="1.5" fill="#1677ff"/><polygon points="605.4,537.2 605.4,536.8 609.8,533 614.2,535.9 620.4,530.2 626.5,533 626.5,537.2" fill="#fff"/><circle cx="610.6" cy="528.2" r="2.2" fill="#fff"/>
<text x="174" y="632.9" font-size="18" font-weight="normal" fill="#1c1c1c" text-anchor="start" textLength="352.7" lengthAdjust="spacing" >Room2D &quot;953-OPEN OFFICE&quot; overlaps with</text>
<text x="174" y="664.4" font-size="18" font-weight="normal" fill="#1c1c1c" text-anchor="start" textLength="367.2" lengthAdjust="spacing" >Room2D &quot;1027-OPEN OFFICE&quot; more than the</text>
<text x="174" y="695.9" font-size="18" font-weight="normal" fill="#1c1c1c" text-anchor="start" textLength="301.6" lengthAdjust="spacing" >tolerance (0.003) on Story &quot;LEVEL 1&quot;.</text>
<rect x="141" y="648" width="21" height="21" rx="4.5" fill="#1677ff"/><polyline points="146,658.5 150,662.5 157,655" fill="none" stroke="#fff" stroke-width="2.4"/>
<rect x="595" y="612" width="42" height="42" rx="7" fill="#1677ff" filter="url(#bsh)"/>
<rect x="604.1" y="620.4" width="23.8" height="20.8" rx="3" fill="#fff"/><rect x="605.4" y="622" width="21.1" height="13" rx="1.5" fill="#1677ff"/><polygon points="605.4,635.2 605.4,634.8 609.8,631 614.2,633.9 620.4,628.2 626.5,631 626.5,635.2" fill="#fff"/><circle cx="610.6" cy="626.2" r="2.2" fill="#fff"/>
<polygon points="85,717.6 85,728.5 91.9,723" fill="#222"/>
<rect x="110.5" y="714.5" width="20" height="20" rx="4.5" fill="#fff" stroke="#d0d0d0" stroke-width="1"/>
<text x="143" y="730" font-size="18" font-weight="normal" fill="#1c1c1c" text-anchor="start" textLength="269" lengthAdjust="spacing" >Colliding Rooms Between Stories</text>
<rect x="418" y="710.7" width="27.5" height="27.5" rx="13.75" fill="#ff4d4f"/>
<text x="431.75" y="729.5" font-size="14" font-weight="bold" fill="#fff" text-anchor="middle" textLength="17" lengthAdjust="spacing" >27</text>
</svg></body></html>
